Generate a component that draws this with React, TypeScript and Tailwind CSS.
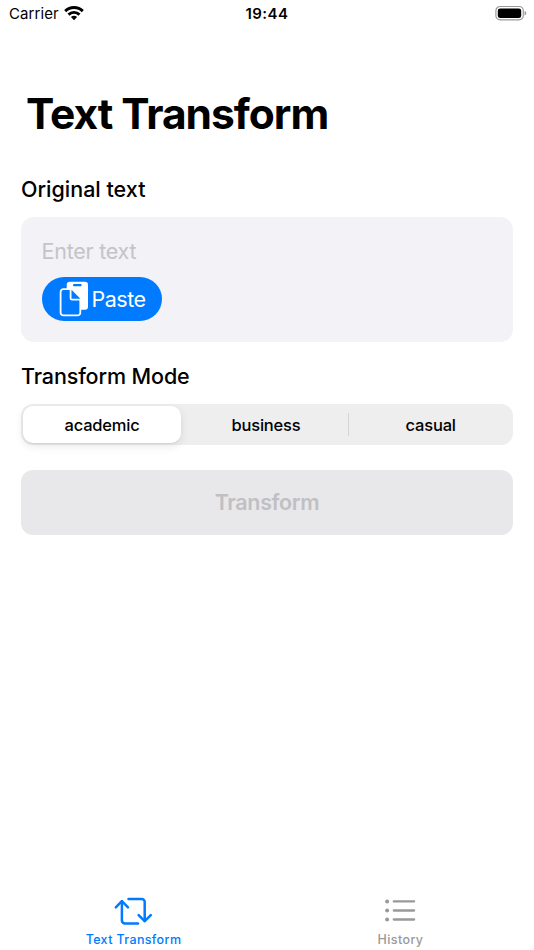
import { useState } from "react";

const MODES = ["academic", "business", "casual"];

function WifiIcon() {
  return (
    <svg className="ml-[5px] h-[15px] w-[20px] -translate-y-px" viewBox="0 0 20 15" fill="none" stroke="#000" strokeWidth="2.9">
      <path d="M1.2 5.1a12.6 12.6 0 0 1 17.6 0" />
      <path d="M4.5 8.6a7.9 7.9 0 0 1 11 0" />
      <path d="M10 14.3 6.9 11.1a4.5 4.5 0 0 1 6.2 0Z" fill="#000" stroke="none" />
    </svg>
  );
}

function BatteryIcon() {
  return (
    <svg className="h-[16px] w-[32px] -translate-y-[0.7px]" viewBox="0 0 32 16" fill="none">
      <rect x="0.9" y="1.2" width="27.4" height="13.4" rx="4.2" stroke="#999" strokeWidth="1.2" />
      <rect x="2.8" y="3.1" width="23.4" height="9.7" rx="2.4" fill="#000" />
      <path d="M29.6 5.7c2.3.7 2.3 3.7 0 4.4Z" fill="#999" />
    </svg>
  );
}

function PasteIcon() {
  return (
    <svg className="h-[36px] w-[30px]" viewBox="0 0 30 36" fill="none">
      <rect x="7.7" y="0.7" width="21.3" height="28" rx="3" fill="#fff" />
      <rect x="14" y="3" width="8.6" height="2.2" rx="1" fill="#007aff" />
      <path
        d="M11.6 8.2H4.3a2.7 2.7 0 0 0-2.7 2.7v20.8a2.7 2.7 0 0 0 2.7 2.7h14.3a2.7 2.7 0 0 0 2.7-2.7V18.6H13.2a1.6 1.6 0 0 1-1.6-1.6Z"
        fill="#007aff"
        stroke="#fff"
        strokeWidth="1.8"
        strokeLinejoin="round"
      />
      <path d="M12.5 8.8v8.9h8.9Z" fill="#007aff" />
    </svg>
  );
}

function TransformIcon() {
  return (
    <svg
      className="h-[30px] w-[40px] -translate-x-px"
      viewBox="0 0 40 30"
      fill="none"
      stroke="#007aff"
      strokeWidth="2.5"
      strokeLinecap="round"
      strokeLinejoin="round"
    >
      <path d="M15.5 2.9h13.2a3 3 0 0 1 3 3v19.2" />
      <path d="m25.6 19.1 6.1 6.1 6.1-6.1" />
      <path d="M25 27.4H11.9a3 3 0 0 1-3-3V5.2" />
      <path d="m2.8 11.3 6.1-6.1 6.1 6.1" />
    </svg>
  );
}

function ListIcon() {
  return (
    <svg className="h-[30px] w-[32px] -translate-x-px" viewBox="0 0 32 30" fill="#999" stroke="#999" strokeLinecap="round">
      {[5.4, 14.5, 23.5].map((y) => (
        <g key={y}>
          <circle cx="3.1" cy={y} r="2" stroke="none" />
          <path d={`M9.8 ${y}h20.3`} strokeWidth="2.3" />
        </g>
      ))}
    </svg>
  );
}

export default function App() {
  const [mode, setMode] = useState("academic");

  return (
    <div className="flex h-[950px] w-[534px] flex-col overflow-hidden bg-white font-['Inter',sans-serif] text-black">
      {/* Status bar */}
      <header className="grid h-[28px] grid-cols-3 items-center pr-[7px] pl-[9px]">
        <div className="flex items-center">
          <span className="text-[15px] tracking-[0.08px]">Carrier</span>
          <WifiIcon />
        </div>
        <span className="pr-[2px] text-center text-[15px] font-semibold tracking-[0.45px]">19:44</span>
        <div className="flex justify-end">
          <BatteryIcon />
        </div>
      </header>

      <main className="flex flex-1 flex-col px-[21px]">
        <h1 className="mt-[60px] pl-[5px] text-[42.5px] leading-[52px] font-bold tracking-[-1.02px] whitespace-nowrap">
          Text Transform
        </h1>

        <h2 className="mt-[35px] text-[21.5px] leading-[28px] font-medium">Original text</h2>
        <div className="mt-[14px] h-[125px] rounded-[13px] bg-[#f2f2f7] px-[20.5px] pt-[20px]">
          <p className="text-[21.5px] leading-[28px] tracking-[-0.25px] text-[#c4c4c7]">Enter text</p>
          <button className="mt-[11.5px] flex h-[44.5px] w-[120.5px] items-center rounded-full bg-[#007aff] pl-[17px] text-white">
            <PasteIcon />
            <span className="ml-[3px] text-[21.5px] leading-[28px] tracking-[-0.5px]">Paste</span>
          </button>
        </div>

        <h2 className="mt-[20px] text-[21.5px] leading-[28px] font-medium tracking-[-0.12px]">Transform Mode</h2>
        <div className="mt-[14px] grid h-[41px] grid-cols-3 rounded-[12px] bg-[#eeeeef] p-[2px]">
          {MODES.map((item, i) => (
            <button
              key={item}
              onClick={() => setMode(item)}
              className={`relative rounded-[10px] pt-px text-[16.5px] font-medium tracking-[-0.2px] ${
                mode === item ? "mr-[4.5px] bg-white shadow-[0_3px_8px_rgba(0,0,0,0.1),0_1px_1px_rgba(0,0,0,0.04)]" : ""
              } ${i === 1 ? "pr-[2px]" : ""} ${i === 2 ? "pl-[2px]" : ""}`}
            >
              {item}
              {i === 2 && mode !== item && mode !== MODES[1] && (
                <span className="absolute top-[7px] left-0 h-[23px] w-px bg-[#d5d5d7]" />
              )}
            </button>
          ))}
        </div>

        <button
          disabled
          className="mt-[25px] h-[65px] rounded-[12px] bg-[#e8e8ea] text-[21.5px] font-semibold tracking-[-0.35px] text-[#c0c0c2]"
        >
          Transform
        </button>
      </main>

      {/* Tab bar */}
      <nav className="grid h-[54px] grid-cols-2">
        <button className="flex flex-col items-center text-[#007aff]">
          <TransformIcon />
          <span className="mt-[6px] text-[12.5px] leading-[16px] font-medium tracking-[0.36px]">Text Transform</span>
        </button>
        <button className="flex flex-col items-center text-[#999]">
          <ListIcon />
          <span className="mt-[6px] text-[12.5px] leading-[16px] font-medium tracking-[0.4px]">History</span>
        </button>
      </nav>
    </div>
  );
}
